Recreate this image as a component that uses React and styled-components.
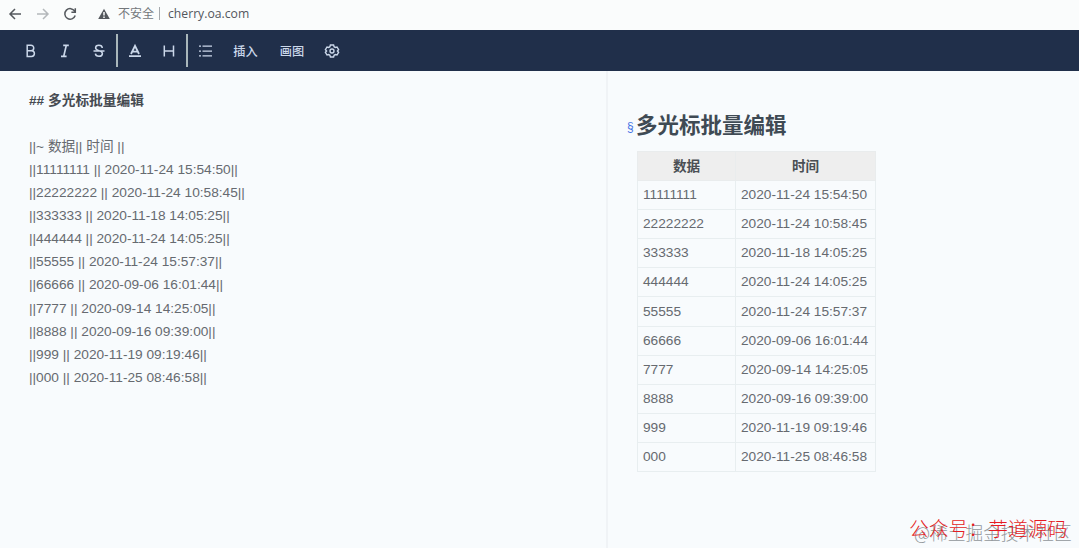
import React from "react";
import styled, { createGlobalStyle } from "styled-components";

const GlobalStyle = createGlobalStyle`
	* {
		box-sizing: border-box;
	}

	body {
		margin: 0;
		overflow: hidden;
		background: #f8fbfd;
		color: #666a70;
		font-family: "Liberation Sans", "Noto Sans CJK SC", sans-serif;
		font-size: 13.7px;
	}
`;

const Page = styled.div`
	position: relative;
	display: flex;
	flex-direction: column;
	width: 1079px;
	height: 548px;
	overflow: hidden;
`;

const BrowserBar = styled.div`
	display: flex;
	align-items: center;
	height: 30px;
	padding: 0 0 3px 8px;
	background: #fafcfc;
	color: #73777b;
`;

const BrowserIcon = styled.svg`
	flex: none;
	width: 14px;
	height: 14px;
	margin-right: ${({ $gap }) => $gap}px;
	fill: none;
	stroke: ${({ $muted }) => ($muted ? "#b4b8bb" : "#54585d")};
	stroke-width: 1.5;
`;

const Security = styled.span`
	width: 42px;
	font-size: 12px;
	line-height: 16px;
	white-space: nowrap;
`;

const AddressDivider = styled.span`
	width: 1px;
	height: 13px;
	margin-right: 8px;
	margin-left: -1px;
	background: #a5a9ad;
`;

const Address = styled.span`
	color: #53575c;
	font-family: "Open Sans", sans-serif;
	font-size: 12.2px;
	line-height: 16px;
`;

const Toolbar = styled.div`
	display: flex;
	align-items: center;
	height: 41px;
	padding-left: 22px;
	background: #202f4a;
	color: #cbd8ea;
`;

const ToolButton = styled.button`
	display: flex;
	align-items: center;
	justify-content: center;
	flex: none;
	width: ${({ $width }) => $width || 34}px;
	height: 35px;
	padding: 0;
	border: 0;
	background: none;
	color: inherit;
	font-family: "Noto Sans CJK SC", sans-serif;
	font-size: 12.2px;
	font-weight: 500;
	white-space: nowrap;
`;

const ToolIcon = styled.svg`
	display: block;
	width: 16px;
	height: 16px;
	fill: none;
	stroke: currentColor;
	stroke-width: 1.5;
`;

const ToolDivider = styled.span`
	flex: none;
	width: 2px;
	height: 33px;
	margin-left: ${({ $offset }) => $offset || 0}px;
	background: #a9b7bb;
`;

const Workspace = styled.main`
	display: flex;
	flex: 1;
`;

const Editor = styled.section`
	width: 608px;
	padding: 17.6px 0 0 29px;
	border-right: 2px solid #f0f3f6;
`;

const Line = styled.div`
	height: 23.12px;
	color: ${({ $heading }) => ($heading ? "#464a51" : "inherit")};
	font-weight: ${({ $heading }) => ($heading ? 700 : 400)};
	line-height: 23.12px;
	white-space: pre;
`;

const Preview = styled.section`
	padding: 39px 0 0 19px;
`;

const Heading = styled.h2`
	display: flex;
	align-items: center;
	height: 32px;
	margin: 0 0 9px;
	color: #3f4a54;
	font-size: 21.5px;
	line-height: 32px;
`;

const Anchor = styled.span`
	width: 9px;
	padding-top: 1px;
	color: #4674e5;
	font-size: 12px;
	font-weight: 400;
`;

const Table = styled.table`
	width: 238px;
	margin-left: 10px;
	border-collapse: collapse;
	table-layout: fixed;
`;

const HeadCell = styled.th`
	width: ${({ $width }) => $width}px;
	height: 29.1px;
	padding: 1px 0 0;
	border: 1px solid #e9eced;
	background: #eeeeee;
	color: #4b4f54;
	font-size: 13.6px;
	line-height: 20px;
`;

const Cell = styled.td`
	height: 29.1px;
	padding: 0 0 0 5px;
	border: 1px solid #e8eef0;
	line-height: 20px;
	white-space: nowrap;
`;

const Watermark = styled.div`
	position: absolute;
	left: 914px;
	top: 519px;
	color: #92979b;
	font-family: "Noto Sans CJK SC", sans-serif;
	font-size: 17.7px;
	font-weight: 300;
	line-height: 26px;
	white-space: nowrap;
`;

const AccountMark = styled(Watermark)`
	left: 909px;
	top: 515px;
	color: #e51c23;
	font-size: 19.8px;
`;

const rows = [
	["11111111", "2020-11-24 15:54:50"],
	["22222222", "2020-11-24 10:58:45"],
	["333333", "2020-11-18 14:05:25"],
	["444444", "2020-11-24 14:05:25"],
	["55555", "2020-11-24 15:57:37"],
	["66666", "2020-09-06 16:01:44"],
	["7777", "2020-09-14 14:25:05"],
	["8888", "2020-09-16 09:39:00"],
	["999", "2020-11-19 09:19:46"],
	["000", "2020-11-25 08:46:58"],
];

const iconPaths = {
	bold: "M4.2 2.2H8a2.75 2.75 0 0 1 0 5.5H4.2zm0 5.5h4.3a2.9 2.9 0 0 1 0 5.8H4.2z",
	italic: "M6.2 2.4h5.6M4 13.4h5.6M9.3 2.4 6.7 13.4",
	strike: "M11.3 5C11 1.4 4.6 1.5 4.6 5c0 3 6.8 2.2 6.8 5.4 0 3.8-6.6 3.8-7 .3M2.5 8h11",
	color: "m4 11 4-8.2 4 8.2M5.5 8.6h5M2 13.2h12",
	header: "M3.3 2.5v11m9.2-11v11M3.3 8h9.2",
	list: "M5.5 3.2H15M5.5 8H15M5.5 12.8H15M2 3.2h2M2 8h2M2 12.8h2",
	settings: "M6.4 2h3.2l.5 1.7 1.2.7 1.7-.4 1.6 2.7L13.4 8l1.2 1.3-1.6 2.7-1.7-.4-1.2.7-.5 1.7H6.4l-.5-1.7-1.2-.7-1.7.4-1.6-2.7L2.6 8 1.4 6.7 3 4l1.7.4 1.2-.7z",
};

const strokeWidths = {
	italic: 1.7,
	color: 1.8,
	list: 1.25,
	settings: 1.4,
};

const Tool = ({ name, width }) => (
	<ToolButton $width={width} aria-label={name}>
		<ToolIcon viewBox="0 0 16 16" strokeWidth={strokeWidths[name]} style={{ strokeWidth: strokeWidths[name] }}>
			<path d={iconPaths[name]} />
			{name === "settings" && <circle cx="8" cy="8" r="2" />}
		</ToolIcon>
	</ToolButton>
);

const AddressBar = () => (
	<BrowserBar>
		<BrowserIcon viewBox="0 0 14 14" $gap={14}>
			<path d="M13 7H2m5-5L2 7l5 5" />
		</BrowserIcon>
		<BrowserIcon viewBox="0 0 14 14" $gap={13} $muted>
			<path d="M1 7h11M7 2l5 5-5 5" />
		</BrowserIcon>
		<BrowserIcon viewBox="0 0 14 14" $gap={20}>
			<path d="M11.7 4.2A5.3 5.3 0 1 0 12.2 8.5M12.3 1.3v4H8.4" />
		</BrowserIcon>
		<BrowserIcon viewBox="0 0 14 14" $gap={7}>
			<path d="M7 1.8 1.2 12h11.6z" fill="#54585d" stroke="none" />
			<path d="M7 5v3.5m0 1v1.4" stroke="#fafcfd" />
		</BrowserIcon>
		<Security>不安全</Security>
		<AddressDivider />
		<Address>cherry.oa.com</Address>
	</BrowserBar>
);

const App = () => (
	<Page>
		<GlobalStyle />
		<AddressBar />
		<Toolbar>
			<Tool name="bold" width={17} />
			<Tool name="italic" width={52} />
			<Tool name="strike" width={16} />
			<ToolDivider $offset={9} />
			<Tool name="color" />
			<Tool name="header" />
			<ToolDivider />
			<Tool name="list" />
			<ToolButton $width={47}>插入</ToolButton>
			<ToolButton $width={46}>画图</ToolButton>
			<Tool name="settings" />
		</Toolbar>
		<Workspace>
			<Editor>
				<Line $heading>## 多光标批量编辑</Line>
				<Line />
				<Line>||~ 数据|| 时间 ||</Line>
				{rows.map(([value, time]) => (
					<Line key={value}>{`||${value} || ${time}||`}</Line>
				))}
			</Editor>
			<Preview>
				<Heading>
					<Anchor>§</Anchor>
					多光标批量编辑
				</Heading>
				<Table>
					<thead>
						<tr>
							<HeadCell $width={98}>数据</HeadCell>
							<HeadCell $width={140}>时间</HeadCell>
						</tr>
					</thead>
					<tbody>
						{rows.map(([value, time]) => (
							<tr key={value}>
								<Cell>{value}</Cell>
								<Cell>{time}</Cell>
							</tr>
						))}
					</tbody>
				</Table>
			</Preview>
		</Workspace>
		<Watermark>@稀土掘金技术社区</Watermark>
		<AccountMark>公众号：芋道源码</AccountMark>
	</Page>
);

export default App;
